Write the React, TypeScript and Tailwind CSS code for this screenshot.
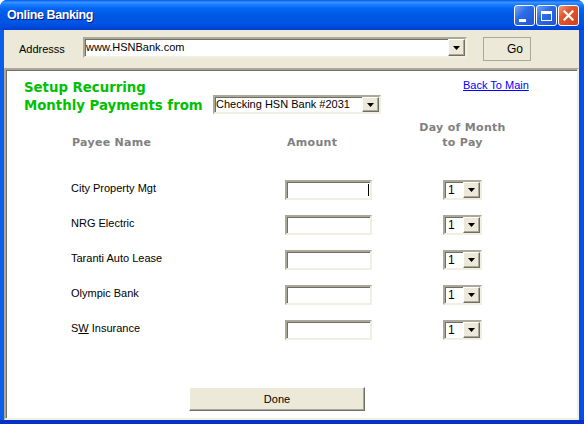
import React from 'react';

const sunken =
  'bg-white border-2 border-t-[#ACA899] border-l-[#ACA899] border-b-[#F1EFE2] border-r-[#F1EFE2] shadow-[inset_1px_1px_0_#716F64]';

const Arrow = () => (
  <svg width="7" height="4" viewBox="0 0 7 4">
    <path d="M0 0h7L3.5 4z" fill="#000" />
  </svg>
);

const DropBtn = () => (
  <div className="w-[17px] flex items-center justify-center bg-[#ECE9D8] border border-t-white border-l-white border-b-[#716F64] border-r-[#716F64] shadow-[inset_-1px_-1px_0_#ACA899]">
    <Arrow />
  </div>
);

const DaySelect = () => (
  <div className={`flex w-[39px] h-[20px] ${sunken}`}>
    <span className="flex-1 pl-[3px] text-[12px] leading-[16px]">1</span>
    <DropBtn />
  </div>
);

const payees = [
  { name: 'City Property Mgt' },
  { name: 'NRG Electric' },
  { name: 'Taranti Auto Lease' },
  { name: 'Olympic Bank' },
  { name: 'SW Insurance', underline: true },
];

const TitleButton = ({ kind }: { kind: 'min' | 'max' | 'close' }) => {
  const bg =
    kind === 'close'
      ? 'bg-[linear-gradient(135deg,#F09C7E_0%,#E4572F_35%,#D2401C_100%)]'
      : 'bg-[linear-gradient(135deg,#76A6F8_0%,#2E6CE6_40%,#1F55D6_100%)]';
  return (
    <div className={`w-[21px] h-[21px] rounded-[3px] border border-white flex items-center justify-center ${bg}`}>
      {kind === 'min' && <div className="w-[7px] h-[3px] bg-white mt-[9px] mr-[4px]" />}
      {kind === 'max' && <div className="w-[11px] h-[10px] border border-white border-t-[3px]" />}
      {kind === 'close' && (
        <svg width="11" height="11" viewBox="0 0 11 11">
          <path d="M1.5 1.5l8 8M9.5 1.5l-8 8" stroke="#fff" strokeWidth="2.2" strokeLinecap="square" />
        </svg>
      )}
    </div>
  );
};

export default function App() {
  return (
    <div
      className="w-[584px] h-[424px] flex flex-col bg-[#0752E2] rounded-t-[7px] overflow-hidden text-black"
      style={{ fontFamily: '"Liberation Sans", Arial, sans-serif' }}
    >
      {/* title bar */}
      <div className="h-[30px] flex items-center pl-[7px] pr-[5px] bg-[linear-gradient(to_bottom,#0058EE_0%,#3A93FF_8%,#1E80FF_14%,#0466F4_28%,#0058E6_50%,#0055E5_75%,#004ADA_90%,#003FD2_100%)]">
        <span className="text-white font-bold text-[12.5px] tracking-[-0.4px] [text-shadow:1px_1px_0_#0A1883] mt-[1px]">
          Online Banking
        </span>
        <div className="ml-auto flex gap-[1px] mt-[1px]">
          <TitleButton kind="min" />
          <TitleButton kind="max" />
          <TitleButton kind="close" />
        </div>
      </div>

      <div className="flex-1 flex pl-[4px] pr-[5px] bg-[linear-gradient(to_right,#0A5FEA_0%,#0550E0_100%)]">
        <div className="flex-1 flex flex-col bg-[#ECE9D8]">
          {/* address toolbar */}
          <div className="h-[38px] flex items-start pt-[7px] text-[11px]">
            <span className="w-[79px] pl-[15px] mt-[4px]">Addresss</span>
            <div className={`flex w-[384px] h-[21px] ${sunken}`}>
              <span className="flex-1 pl-[1px] text-[11px] leading-[16px]">www.HSNBank.com</span>
              <DropBtn />
            </div>
            <div className="ml-[16px] w-[48px] h-[24px] border border-[#ACA899] flex items-center justify-end pr-[7px] text-[12px]">
              Go
            </div>
          </div>

          {/* content */}
          <div className="flex-1 flex flex-col bg-white border-2 border-t-[#ACA899] border-l-[#ACA899] border-b-[#F1EFE2] border-r-[#F1EFE2] shadow-[inset_1px_1px_0_#716F64]">
            <div className="flex items-end pl-[18px] pt-[9px]">
              <div
                className="w-[189px] text-[13.3px] leading-[18px] font-bold text-[#00C000]"
                style={{ fontFamily: '"DejaVu Sans", Verdana, sans-serif' }}
              >
                Setup Recurring
                <br />
                Monthly Payments from
              </div>
              <div className={`flex w-[168px] h-[19px] mb-[1px] ${sunken}`}>
                <span className="flex-1 pl-[1px] text-[11px] leading-[15px]">Checking HSN Bank #2031</span>
                <DropBtn />
              </div>
              <a className="self-start ml-[82px] text-[11px] leading-[13px] text-[#0000FF] underline" href="#">
                Back To Main
              </a>
            </div>

            {/* column headers */}
            <div
              className="flex items-end mt-[5px] pl-[65px] text-[11px] leading-[15px] font-bold text-[#808080] tracking-[0.3px]"
              style={{ fontFamily: '"DejaVu Sans", Verdana, sans-serif' }}
            >
              <span className="w-[214px] pl-[1px]">Payee Name</span>
              <span className="w-[158px] pl-[2px]">Amount</span>
              <div className="w-[39px] flex flex-col items-center whitespace-nowrap">
                <span>Day of Month</span>
                <span>to Pay</span>
              </div>
            </div>

            {/* payee rows */}
            <div className="flex flex-col mt-[22px] pl-[65px] text-[11px]">
              {payees.map((p, i) => (
                <div key={p.name} className="h-[35px] flex items-center">
                  <span className="w-[214px] -mt-[3px]">
                    {p.underline ? (
                      <>
                        S<span className="underline">W</span> Insurance
                      </>
                    ) : (
                      p.name
                    )}
                  </span>
                  <div className={`relative w-[87px] h-[20px] ${sunken}`}>
                    {i === 0 && <div className="absolute left-[81px] top-[2px] w-[1px] h-[12px] bg-black" />}
                  </div>
                  <div className="ml-[71px]">
                    <DaySelect />
                  </div>
                </div>
              ))}
            </div>

            <div className="mt-[40px] ml-[183px] w-[176px] h-[24px] flex items-center justify-center bg-[#ECE9D8] border border-t-white border-l-white border-b-[#716F64] border-r-[#716F64] shadow-[inset_-1px_-1px_0_#ACA899] text-[11px]">
              Done
            </div>
          </div>
        </div>
      </div>
      <div className="h-[4px] bg-[#0730C8]" />
    </div>
  );
}
